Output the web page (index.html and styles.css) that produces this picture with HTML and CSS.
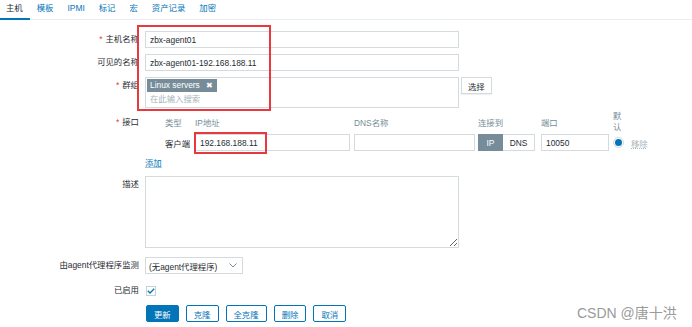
FILE: index.html
```html
<!DOCTYPE html>
<html lang="zh">
<head>
<meta charset="utf-8">
<title>主机</title>
<link rel="stylesheet" href="styles.css">
</head>
<body>
<div class="page">
  <div class="tabs">
    <span class="tab active">主机</span>
    <span class="tab">模板</span>
    <span class="tab">IPMI</span>
    <span class="tab">标记</span>
    <span class="tab">宏</span>
    <span class="tab">资产记录</span>
    <span class="tab">加密</span>
  </div>

  <div class="form">
    <div class="row r-name">
      <div class="lbl"><span class="req">*</span>主机名称</div>
      <div class="field"><input class="txt wide" type="text" value="zbx-agent01"></div>
    </div>

    <div class="row r-visible">
      <div class="lbl">可见的名称</div>
      <div class="field"><input class="txt wide" type="text" value="zbx-agent01-192.168.188.11"></div>
    </div>

    <div class="row r-groups">
      <div class="lbl"><span class="req">*</span>群组</div>
      <div class="field field-inline">
        <div class="multiselect">
          <span class="tag">Linux servers <span class="tag-x">✖</span></span>
          <span class="ms-placeholder">在此输入搜索</span>
        </div>
        <button class="btn-grey" type="button">选择</button>
      </div>
    </div>

    <div class="row r-iface">
      <div class="lbl lbl-iface"><span class="req">*</span>接口</div>
      <div class="field">
        <div class="iface">
          <span></span>
          <span class="th">类型</span>
          <span class="th">IP地址</span>
          <span class="th">DNS名称</span>
          <span class="th">连接到</span>
          <span class="th">端口</span>
          <span class="th th-default">默认</span>
          <span></span>

          <span></span>
          <span class="td-type">客户端</span>
          <span><input class="txt ip" type="text" value="192.168.188.11"></span>
          <span><input class="txt dns" type="text" value=""></span>
          <span class="toggle"><span class="tg tg-on">IP</span><span class="tg tg-off">DNS</span></span>
          <span><input class="txt port" type="text" value="10050"></span>
          <span class="radio"><span class="radio-dot"></span></span>
          <span class="remove">移除</span>
        </div>
        <a class="add-link" href="#">添加</a>
      </div>
    </div>

    <div class="row r-desc">
      <div class="lbl">描述</div>
      <div class="field"><textarea class="area"></textarea></div>
    </div>

    <div class="row r-proxy">
      <div class="lbl">由agent代理程序监测</div>
      <div class="field">
        <div class="select">
          <span>(无agent代理程序)</span>
          <svg class="chev" width="8" height="5" viewBox="0 0 8 5"><path d="M0.5 0.5 L4 4 L7.5 0.5" fill="none" stroke="#768d99" stroke-width="1"/></svg>
        </div>
      </div>
    </div>

    <div class="row r-enabled">
      <div class="lbl">已启用</div>
      <div class="field field-center">
        <span class="checkbox">
          <svg width="8" height="6" viewBox="0 0 8 6"><path d="M0.8 2.8 L3 5 L7.2 0.8" fill="none" stroke="#0275b8" stroke-width="1.3"/></svg>
        </span>
      </div>
    </div>

    <div class="row r-buttons">
      <div class="lbl"></div>
      <div class="field buttons">
        <button class="btn-main" type="button">更新</button>
        <button class="btn-alt" type="button">克隆</button>
        <button class="btn-alt" type="button">全克隆</button>
        <button class="btn-alt" type="button">删除</button>
        <button class="btn-alt" type="button">取消</button>
      </div>
    </div>
  </div>

  <div class="mark mark-top"></div>
  <div class="mark mark-ip"></div>
  <div class="watermark">CSDN @唐十洪</div>
</div>
</body>
</html>
```

FILE: styles.css
```css
* { box-sizing: border-box; }

html, body {
  margin: 0;
  padding: 0;
  background: #ffffff;
}

body {
  font-family: "Liberation Sans", "Noto Sans CJK SC", sans-serif;
  font-size: 8.4px;
  color: #1f2c33;
}

.page {
  position: relative;
  width: 692px;
  height: 327px;
  overflow: hidden;
}

/* Tabs */
.tabs {
  display: flex;
  height: 20px;
  border-bottom: 1px solid #ebeef0;
  margin-left: -1px;
}

.tab {
  padding: 0 7px;
  line-height: 17px;
  color: #0275b8;
  border-bottom: 2px solid transparent;
  margin-bottom: -1px;
}

.tab.active {
  color: #1f2c33;
  border-bottom-color: #0275b8;
}

/* Form */
.form {
  padding-top: 11px;
}

.row {
  display: flex;
  align-items: flex-start;
}

.lbl {
  flex: none;
  width: 139px;
  margin-right: 6px;
  text-align: right;
  line-height: 17px;
  white-space: nowrap;
}

.req {
  color: #e33734;
  margin-right: 3px;
}

.field {
  flex: none;
}

.field-inline {
  display: flex;
  align-items: flex-start;
  gap: 2px;
}

.field-center {
  display: flex;
  align-items: center;
  height: 17px;
}

.r-visible { margin-top: 6px; }
.r-groups { margin-top: 6px; }
.r-iface { margin-top: 3px; }
.r-desc { margin-top: 7px; }
.r-proxy { margin-top: 9px; }
.r-enabled { margin-top: 8px; }
.r-buttons { margin-top: 6px; }

.txt {
  display: block;
  height: 17px;
  margin: 0;
  padding: 0 4px;
  border: 1px solid #d4dbdf;
  background: #ffffff;
  font-family: inherit;
  font-size: 8.4px;
  color: #1f2c33;
  outline: none;
}

.wide { width: 314px; }
.ip { width: 155px; }
.dns { width: 121px; }
.port { width: 68px; }

/* Multiselect */
.multiselect {
  width: 314px;
  height: 31px;
  border: 1px solid #d4dbdf;
  padding: 1px 1px;
  display: flex;
  flex-direction: column;
  align-items: flex-start;
}

.tag {
  background: #768d99;
  color: #ffffff;
  line-height: 12px;
  padding: 0 4px 0 3px;
  white-space: nowrap;
}

.tag-x {
  font-size: 7.5px;
  margin-left: 4px;
}

.ms-placeholder {
  color: #a8b5bb;
  line-height: 15px;
  padding-left: 3px;
  margin-top: 0;
}

.btn-grey {
  height: 17px;
  margin: 0;
  padding: 0 6px;
  background: #ffffff;
  border: 1px solid #d4dbdf;
  font-family: inherit;
  font-size: 8.4px;
  color: #1f2c33;
  box-shadow: 0 1px 1px rgba(0, 0, 0, 0.06);
}

/* Interfaces */
.lbl-iface {
  line-height: 22px;
}

.iface {
  display: grid;
  grid-template-columns: 20px 30px 159px 124px 63px 72px 17px auto;
  grid-template-rows: 22px 17px;
  row-gap: 1px;
  align-items: center;
}

.th {
  color: #768d99;
}

.th-default {
  width: 10px;
  line-height: 11px;
}

.td-type {
  color: #1f2c33;
}

.toggle {
  display: flex;
  width: 57px;
  height: 17px;
}

.tg {
  display: flex;
  align-items: center;
  justify-content: center;
  height: 17px;
}

.tg-on {
  width: 25px;
  background: #768d99;
  color: #ffffff;
}

.tg-off {
  width: 32px;
  border: 1px solid #d4dbdf;
  border-left: none;
  color: #1f2c33;
}

.radio {
  width: 11px;
  height: 11px;
  border: 1px solid #cfd8dc;
  border-radius: 50%;
  display: flex;
  align-items: center;
  justify-content: center;
  margin-left: 0;
}

.radio-dot {
  width: 7px;
  height: 7px;
  border-radius: 50%;
  background: #0275b8;
}

.remove {
  color: #a8b5bb;
  text-decoration: underline dotted;
  padding-left: 1px;
}

.add-link {
  display: inline-block;
  margin-top: 6px;
  line-height: 12px;
  color: #0275b8;
  text-decoration: underline;
  text-decoration-color: #9cc6e0;
}

/* Textarea */
.area {
  display: block;
  width: 314px;
  height: 72px;
  margin: 0;
  border: 1px solid #d4dbdf;
  font-family: inherit;
  font-size: 8.4px;
  resize: both;
  outline: none;
}

/* Select */
.select {
  width: 98px;
  height: 17px;
  border: 1px solid #d4dbdf;
  display: flex;
  align-items: center;
  justify-content: space-between;
  padding: 0 5px 0 3px;
}

.chev {
  display: block;
}

/* Checkbox */
.checkbox {
  width: 10px;
  height: 10px;
  margin-left: 1px;
  border: 1px solid #c8d1d6;
  display: flex;
  align-items: center;
  justify-content: center;
}

.checkbox svg {
  display: block;
}

/* Buttons */
.buttons {
  display: flex;
  gap: 7px;
  padding-left: 1px;
}

.btn-main,
.btn-alt {
  height: 17px;
  margin: 0;
  padding: 0 7px;
  font-family: inherit;
  font-size: 8.4px;
  border: 1px solid #0275b8;
  border-radius: 2px;
}

.btn-main {
  background: #0275b8;
  color: #ffffff;
}

.btn-alt {
  background: #ffffff;
  color: #0275b8;
}

/* Annotation overlays */
.mark {
  position: absolute;
  border: 2px solid #e8393e;
}

.mark-top {
  left: 137px;
  top: 25px;
  width: 134px;
  height: 86px;
}

.mark-ip {
  left: 194px;
  top: 132px;
  width: 73px;
  height: 22px;
}

.watermark {
  position: absolute;
  left: 577px;
  top: 302px;
  font-size: 14px;
  color: #9a9a9a;
  white-space: nowrap;
}
```
